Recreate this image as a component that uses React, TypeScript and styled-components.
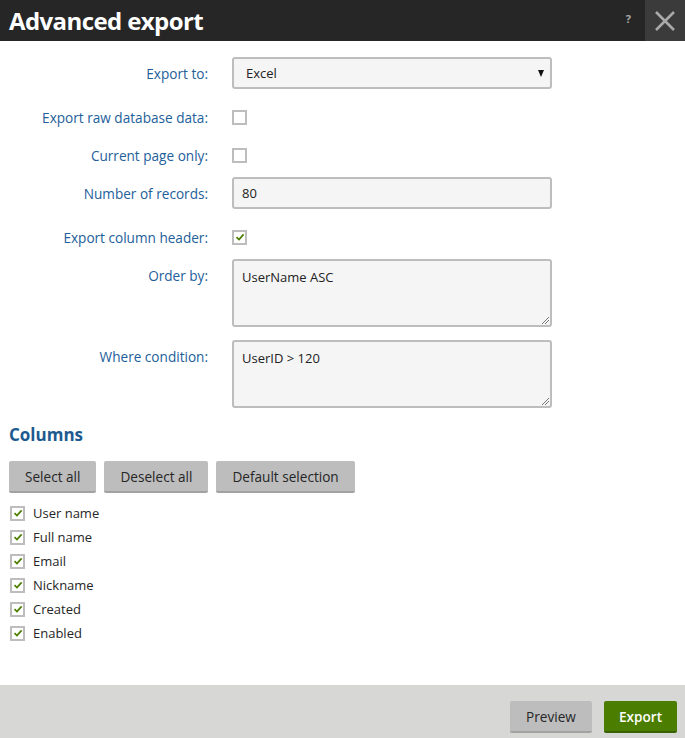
import styled, { createGlobalStyle } from "styled-components";

const GlobalStyle = createGlobalStyle`
  html, body {
    margin: 0;
    padding: 0;
    background: #fff;
  }
  body {
    font-family: "Open Sans", "Noto Sans", sans-serif;
  }
`;

const columns = ["User name", "Full name", "Email", "Nickname", "Created", "Enabled"];

const Check = ({ checked }: { checked?: boolean }) => (
  <Box>
    {checked && (
      <svg width="10" height="10" viewBox="0 0 10 10">
        <path d="M1.5 5.2 L4 7.6 L8.6 2.4" fill="none" stroke="#4a7d00" strokeWidth="1.7" />
      </svg>
    )}
  </Box>
);

export default function App() {
  return (
    <>
      <GlobalStyle />
      <Dialog>
        <Header>
          <Title>Advanced export</Title>
          <Help>?</Help>
          <Close>
            <svg width="22" height="22" viewBox="0 0 22 22">
              <path d="M2 2 L20 20 M20 2 L2 20" stroke="#a9a9a9" strokeWidth="2.6" />
            </svg>
          </Close>
        </Header>
        <Body>
          <Row $mt={0} $center>
            <Label>Export to:</Label>
            <Select>
              <span>Excel</span>
              <Arrow />
            </Select>
          </Row>
          <Row $mt={17} $center>
            <Label>Export raw database data:</Label>
            <Check />
          </Row>
          <Row $mt={16} $center>
            <Label>Current page only:</Label>
            <Check />
          </Row>
          <Row $mt={11} $center>
            <Label>Number of records:</Label>
            <Input>80</Input>
          </Row>
          <Row $mt={17} $center>
            <Label>Export column header:</Label>
            <Check checked />
          </Row>
          <Row $mt={11}>
            <Label $pad>Order by:</Label>
            <TextArea>
              UserName ASC
              <Grip />
            </TextArea>
          </Row>
          <Row $mt={13}>
            <Label $pad>Where condition:</Label>
            <TextArea>
              UserID &gt; 120
              <Grip />
            </TextArea>
          </Row>

          <Heading>Columns</Heading>
          <Buttons>
            <GrayButton>Select all</GrayButton>
            <GrayButton>Deselect all</GrayButton>
            <GrayButton>Default selection</GrayButton>
          </Buttons>
          <List>
            {columns.map((c) => (
              <Item key={c}>
                <Check checked />
                <span>{c}</span>
              </Item>
            ))}
          </List>
        </Body>
        <Footer>
          <GrayButton $w={82}>Preview</GrayButton>
          <PrimaryButton>Export</PrimaryButton>
        </Footer>
      </Dialog>
    </>
  );
}

const Dialog = styled.div`
  width: 685px;
  height: 738px;
  display: flex;
  flex-direction: column;
  background: #fff;
`;

const Header = styled.div`
  height: 41px;
  background: #262626;
  display: flex;
  align-items: center;
`;

const Title = styled.h1`
  margin: 0 0 0 9px;
  flex: 1;
  color: #fff;
  font-family: "Open Sans", sans-serif;
  font-size: 24px;
  font-weight: 700;
  letter-spacing: -0.6px;
`;

const Help = styled.span`
  color: #a9a9a9;
  font-size: 11px;
  font-weight: 700;
  margin-right: 14px;
  margin-top: -4px;
`;

const Close = styled.div`
  width: 40px;
  height: 41px;
  background: #3b3b3b;
  display: flex;
  align-items: center;
  justify-content: center;
`;

const Body = styled.div`
  flex: 1;
  padding: 16px 0 0 9px;
  display: flex;
  flex-direction: column;
`;

const Row = styled.div<{ $mt: number; $center?: boolean }>`
  display: flex;
  align-items: ${(p) => (p.$center ? "center" : "flex-start")};
  margin-top: ${(p) => p.$mt}px;
  min-height: 22px;
`;

const Label = styled.div<{ $pad?: boolean }>`
  width: 199px;
  margin-right: 24px;
  text-align: right;
  color: #23609a;
  font-size: 13.6px;
  padding-top: ${(p) => (p.$pad ? "7px" : "0")};
`;

const fieldBase = `
  box-sizing: border-box;
  width: 320px;
  background: #f5f5f5;
  border: 2px solid #bdbdbd;
  border-radius: 3px;
  color: #222;
  font-size: 13px;
  padding: 0 8px;
`;

const Select = styled.div`
  ${fieldBase}
  height: 32px;
  display: flex;
  align-items: center;
  justify-content: space-between;
  padding: 0 6px 0 12px;
`;

const Arrow = styled.span`
  width: 0;
  height: 0;
  border-left: 3.5px solid transparent;
  border-right: 3.5px solid transparent;
  border-top: 7px solid #111;
`;

const Input = styled.div`
  ${fieldBase}
  height: 32px;
  display: flex;
  align-items: center;
`;

const TextArea = styled.div`
  ${fieldBase}
  position: relative;
  height: 68px;
  padding-top: 7px;
`;

const Grip = styled.span`
  position: absolute;
  right: 1px;
  bottom: 1px;
  width: 7px;
  height: 7px;
  background: linear-gradient(
    135deg,
    transparent 45%,
    #777 45%,
    #777 53%,
    transparent 53%,
    transparent 70%,
    #777 70%,
    #777 78%,
    transparent 78%
  );
`;

const Box = styled.span`
  box-sizing: border-box;
  width: 15px;
  height: 15px;
  border: 2px solid #bdbdbd;
  background: #fff;
  display: inline-flex;
  align-items: center;
  justify-content: center;
  flex-shrink: 0;
`;

const Heading = styled.h2`
  margin: 15px 0 0 0;
  color: #1d5a8f;
  font-size: 17px;
  font-weight: 700;
`;

const Buttons = styled.div`
  display: flex;
  gap: 8px;
  margin-top: 15px;
`;

const GrayButton = styled.button<{ $w?: number }>`
  height: 32px;
  ${(p) => (p.$w ? `width: ${p.$w}px;` : "padding: 0 16px;")}
  background: #bdbdbd;
  border: none;
  border-bottom: 2px solid #a2a2a2;
  border-radius: 2px;
  color: #262626;
  font-family: "Open Sans", sans-serif;
  font-size: 13.6px;
`;

const PrimaryButton = styled.button`
  height: 32px;
  width: 73px;
  background: #4b7d00;
  border: none;
  border-bottom: 2px solid #3a6200;
  border-radius: 2px;
  color: #fff;
  font-family: "Open Sans", sans-serif;
  font-size: 13.6px;
  font-weight: 600;
`;

const List = styled.div`
  margin-top: 8px;
  display: flex;
  flex-direction: column;
`;

const Item = styled.div`
  height: 24px;
  display: flex;
  align-items: center;
  gap: 8px;
  padding-left: 1px;
  color: #262626;
  font-size: 13px;
`;

const Footer = styled.div`
  height: 53px;
  box-sizing: border-box;
  background: #d7d8d5;
  display: flex;
  justify-content: flex-end;
  align-items: flex-start;
  gap: 12px;
  padding: 16px 8px 0 0;
`;
